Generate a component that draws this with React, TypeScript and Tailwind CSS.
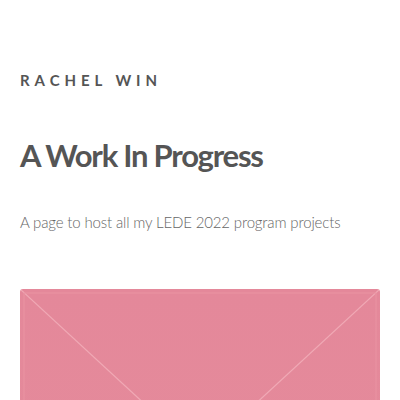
import React from 'react';

export default function App() {
  return (
    <div className="min-h-screen bg-white px-5 pt-[70px] font-['Lato','Open_Sans',sans-serif] text-[#555]">
      {/* Site title */}
      <div className="text-[15px] font-bold uppercase tracking-[0.33em] leading-5">Rachel Win</div>

      {/* Heading */}
      <h1 className="mt-[47px] text-[31px] font-bold tracking-[-0.04em] leading-9 text-[#555]">A Work In Progress</h1>

      {/* Description */}
      <p className="mt-[37px] text-[15px] font-light text-[#666] tracking-[-0.01em] leading-6">
        A page to host all my LEDE 2022 program projects
      </p>

      {/* Card */}
      <div className="relative mt-[55px] h-[220px] w-full overflow-hidden rounded-[3px] bg-gradient-to-b from-[#e4889a] to-[#e58b9b]">
        <svg className="absolute inset-0 h-full w-full" viewBox="0 0 360 220" preserveAspectRatio="none">
          <line x1="0" y1="0" x2="180" y2="166" stroke="#f0a9b5" strokeWidth="1.2" />
          <line x1="360" y1="0" x2="180" y2="166" stroke="#f0a9b5" strokeWidth="1.2" />
          <rect x="4" y="4" width="352" height="212" fill="none" stroke="#e993a2" strokeWidth="1" />
        </svg>
      </div>
    </div>
  );
}
